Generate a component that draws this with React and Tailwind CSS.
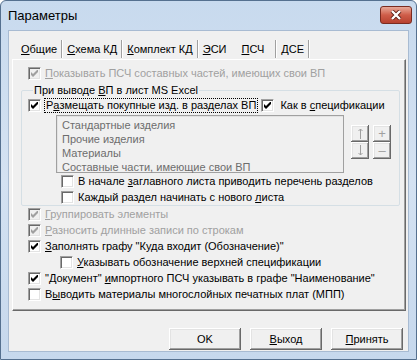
import React from 'react';

const tabs = [
    { key: 'О', rest: 'бщие' },
    { key: 'С', rest: 'хема КД' },
    { key: 'К', rest: 'омплект КД' },
    { key: 'Э', rest: 'СИ', nosep: true },
    { key: 'П', rest: 'СЧ', active: true },
    { key: 'Д', rest: 'СЕ' },
];

const listItems = ['Стандартные изделия', 'Прочие изделия', 'Материалы', 'Составные части, имеющие свои ВП'];

function CheckBox({ checked, disabled }) {
    return (
        <span className={`w-[13px] h-[13px] shrink-0 flex items-center justify-center border border-t-[#a0a0a0] border-l-[#a0a0a0] border-r-white border-b-white shadow-[inset_1px_1px_#696969,inset_-1px_-1px_#e3e3e3] ${disabled ? 'bg-[#f0f0f0]' : 'bg-white'}`}>
            {checked && (
                <svg width="7" height="7" viewBox="0 0 7 7" className={disabled ? 'fill-[#a0a0a0]' : 'fill-black'}>
                    <path d="M0 2 L2 4 L6 0 L7 0 L7 2 L2 7 L0 5 Z" />
                </svg>
            )}
        </span>
    );
}

function Row({ checked, disabled, pad = 'pl-[15px]', children }) {
    return (
        <div className={`h-[16px] flex items-center gap-[4px] ${pad} ${disabled ? 'text-[#a0a0a0]' : 'text-black'}`}>
            <CheckBox checked={checked} disabled={disabled} />
            <span className="whitespace-nowrap leading-none">{children}</span>
        </div>
    );
}

function SmallBtn({ children }) {
    return (
        <div className="w-[18px] h-[17px] flex items-center justify-center bg-[#f0f0f0] text-[#a0a0a0] shadow-[inset_-1px_-1px_#696969,inset_1px_1px_#fff,inset_-2px_-2px_#a0a0a0,inset_2px_2px_#e3e3e3]">
            {children}
        </div>
    );
}

function Button({ children }) {
    return (
        <button className="w-[72px] h-[22px] flex items-center justify-center bg-[#f0f0f0] text-black shadow-[inset_-1px_-1px_#696969,inset_1px_1px_#fff,inset_-2px_-2px_#a0a0a0,inset_2px_2px_#e3e3e3]">
            {children}
        </button>
    );
}

export default function App() {
    return (
        <div className="w-[417px] h-[360px] font-['Liberation_Sans',sans-serif] text-[11px] text-black select-none">
            <div className="w-full h-full flex flex-col rounded-t-[6px] border border-[#55708f] bg-gradient-to-b from-[#c8daee] via-[#d4e2f2] to-[#c6d8ed]">
                <div className="h-[29px] flex items-center justify-between pl-[7px] pr-[4px]">
                    <span className="text-[13px] text-black">Параметры</span>
                    <div className="w-[32px] h-[18px] mt-[-2px] rounded-[3px] border border-[#7a2b20] bg-gradient-to-b from-[#e6a899] via-[#cf5d49] to-[#b7412f] flex items-center justify-center">
                        <svg width="12" height="10" viewBox="0 0 12 10">
                            <path d="M2 1 L10 9 M10 1 L2 9" stroke="#5a1d14" strokeWidth="4" />
                            <path d="M2 1 L10 9 M10 1 L2 9" stroke="#fff" strokeWidth="2.4" />
                        </svg>
                    </div>
                </div>

                <div className="flex-1 mx-[7px] mb-[7px] bg-[#f0f0f0] border border-[#a8bbd2] flex flex-col">
                    <div className="h-[28px] flex items-end pl-[8px]">
                        <div className="h-[20px] flex items-center">
                            {tabs.map((t, i) => (
                                <div key={i} className="flex items-center h-full">
                                    <span className={t.active ? 'px-[11px] pt-[1px]' : 'px-[4px]'}>
                                        <u>{t.key}</u>{t.rest}
                                    </span>
                                    {!t.nosep && (
                                        <span className="w-[2px] h-[18px] border-l border-[#a0a0a0] border-r border-r-white" />
                                    )}
                                </div>
                            ))}
                        </div>
                    </div>

                    <div className="ml-[3px] mr-[2px] h-[252px] flex flex-col border border-t-white border-l-white border-r-[#696969] border-b-[#696969] shadow-[inset_-1px_-1px_#a0a0a0]">
                        <div className="pt-[5px]">
                            <Row checked disabled>
                                <u>П</u>оказывать ПСЧ составных частей, имеющих свои ВП
                            </Row>
                        </div>

                        <fieldset className="ml-[8px] mr-[5px] mt-[2px] border border-[#d5dfe5] rounded-[2px] pl-[6px]">
                            <legend className="ml-[5px] px-[1px] leading-[14px]">
                                При выводе <u>В</u>П в лист MS Excel
                            </legend>
                            <div className="h-[16px] flex items-center">
                                <CheckBox checked />
                                <span className="ml-[3px] h-[15px] px-[1px] flex items-center border border-dotted border-black whitespace-nowrap">
                                    Р<u>а</u>змещать покупные изд. в разделах ВП
                                </span>
                                <span className="ml-[3px]"><CheckBox checked /></span>
                                <span className="ml-[6px] whitespace-nowrap">Как в <u>с</u>пецификации</span>
                            </div>
                            <div className="flex mt-[2px]">
                                <div className="ml-[28px] w-[288px] h-[58px] border border-[#a0a0a0] shadow-[inset_1px_1px_#e3e3e3] pt-[2px] pl-[5px] text-[#6d6d6d]">
                                    {listItems.map((it) => (
                                        <div key={it} className="h-[14px] leading-[14px] whitespace-nowrap">{it}</div>
                                    ))}
                                </div>
                                <div className="ml-[7px] mt-[10px] flex gap-[4px]">
                                    <div className="flex flex-col">
                                        <SmallBtn>
                                            <svg width="5" height="11" viewBox="0 0 5 11"><path d="M2.5 1 V11 M0.5 3 L2.5 1 L4.5 3" stroke="#a0a0a0" fill="none" /></svg>
                                        </SmallBtn>
                                        <SmallBtn>
                                            <svg width="5" height="11" viewBox="0 0 5 11"><path d="M2.5 0 V10 M0.5 8 L2.5 10 L4.5 8" stroke="#a0a0a0" fill="none" /></svg>
                                        </SmallBtn>
                                    </div>
                                    <div className="flex flex-col">
                                        <SmallBtn><span className="text-[13px] leading-none">+</span></SmallBtn>
                                        <SmallBtn><span className="text-[13px] leading-none">–</span></SmallBtn>
                                    </div>
                                </div>
                            </div>
                            <Row pad="pl-[33px]">
                                В начале <u>з</u>аглавного листа приводить перечень разделов
                            </Row>
                            <Row pad="pl-[33px]">
                                Каждый раздел начинать с нового <u>л</u>иста
                            </Row>
                        </fieldset>

                        <Row checked disabled><u>Г</u>руппировать элементы</Row>
                        <Row checked disabled><u>Р</u>азносить длинные записи по строкам</Row>
                        <Row checked><u>З</u>аполнять графу "Куда входит (Обозначение)"</Row>
                        <Row pad="pl-[47px]"><u>У</u>казывать обозначение верхней спецификации</Row>
                        <Row checked>"Документ" <u>и</u>мпортного ПСЧ указывать в графе "Наименование"</Row>
                        <Row>В<u>ы</u>водить материалы многослойных печатных плат (МПП)</Row>
                    </div>

                    <div className="mt-[17px] mr-[5px] flex justify-end gap-[9px]">
                        <Button>OK</Button>
                        <Button><u>В</u>ыход</Button>
                        <Button><u>П</u>ринять</Button>
                    </div>
                </div>
            </div>
        </div>
    );
}
